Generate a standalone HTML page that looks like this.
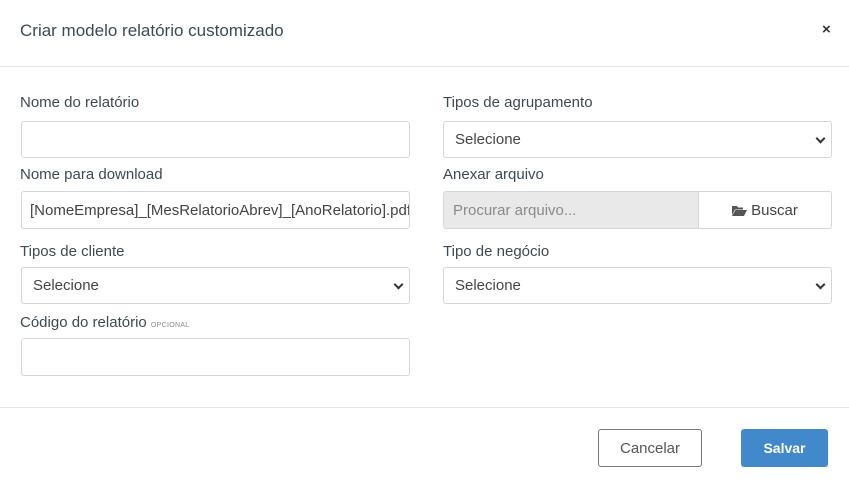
<!DOCTYPE html><html><head><style>
body{margin:0;width:849px;height:486px;background:#fff;font-family:"Liberation Sans",sans-serif;position:relative;overflow:hidden;color:#3a4650}
.a{position:absolute}
.t{font-size:17px;color:#3d4a54}
.l{font-size:15px;color:#3d4a54}
.i{position:absolute;box-sizing:border-box;border:1px solid #d3d7db;border-radius:3px;background:#fff;font-size:15px;color:#444;padding-left:11px;display:flex;align-items:center}
.sel:after{content:"";position:absolute;right:7px;top:13px;width:5px;height:5px;border-right:2px solid #333;border-bottom:2px solid #333;transform:rotate(45deg)}
.hr{position:absolute;left:0;width:849px;height:1px;background:#e5e7e9}
</style></head><body>
<div class="a t" style="left:20px;top:21px">Criar modelo relatório customizado</div>
<div class="a" style="left:822px;top:21px;font-size:15px;font-weight:bold;color:#333">×</div>
<div class="hr" style="top:66px"></div>
<div class="a l" style="left:20px;top:94px">Nome do relatório</div>
<div class="i" style="left:21px;top:121px;width:389px;height:37px"></div>
<div class="a l" style="left:20px;top:166px">Nome para download</div>
<div class="i" style="left:21px;top:191px;width:389px;height:38px;padding-left:8px;overflow:hidden;white-space:nowrap">[NomeEmpresa]_[MesRelatorioAbrev]_[AnoRelatorio].pdf</div>
<div class="a l" style="left:20px;top:243px">Tipos de cliente</div>
<div class="i sel" style="left:21px;top:267px;width:389px;height:37px">Selecione</div>
<div class="a l" style="left:20px;top:314px">Código do relatório <span style="font-size:7px;color:#888;letter-spacing:.3px">OPCIONAL</span></div>
<div class="i" style="left:21px;top:338px;width:389px;height:38px"></div>
<div class="a l" style="left:443px;top:94px">Tipos de agrupamento</div>
<div class="i sel" style="left:443px;top:121px;width:389px;height:37px">Selecione</div>
<div class="a l" style="left:443px;top:166px">Anexar arquivo</div>
<div class="i" style="left:443px;top:191px;width:256px;height:38px;background:#e9e9e9;color:#8a8a8a;padding-left:9px;border-radius:3px 0 0 3px">Procurar arquivo...</div>
<div class="i" style="left:698px;top:191px;width:134px;height:38px;justify-content:center;padding:0;color:#444;border-radius:0 3px 3px 0"><svg width="15" height="11" viewBox="0 0 15 11" style="margin-right:4px"><path d="M0 1h5l1 1.5h5v2H3L0 10z" fill="#555"/><path d="M3.5 5H15l-3 6H0z" fill="#555"/></svg>Buscar</div>
<div class="a l" style="left:443px;top:243px">Tipo de negócio</div>
<div class="i sel" style="left:443px;top:267px;width:389px;height:37px">Selecione</div>
<div class="hr" style="top:407px"></div>
<div class="i" style="left:598px;top:429px;width:104px;height:38px;justify-content:center;padding:0;border-color:#777;color:#555">Cancelar</div>
<div class="i" style="left:741px;top:429px;width:87px;height:38px;justify-content:center;padding:0;border:none;background:#4289cb;color:#fff;font-weight:bold;font-size:14px">Salvar</div>
</body></html>
